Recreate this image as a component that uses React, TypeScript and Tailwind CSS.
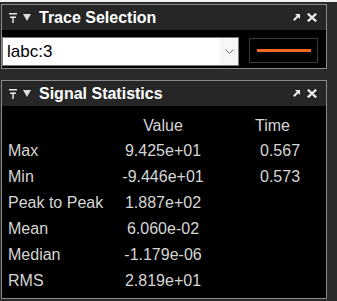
import React from 'react'

const font = "font-['Liberation_Sans',Arial,sans-serif]"

function PinIcon() {
    return (
        <svg width="8" height="10" viewBox="0 0 8 10" className="shrink-0">
            <rect x="0" y="0" width="8" height="1.5" fill="#e4e4e4" />
            <rect x="1" y="3.5" width="6" height="1.5" fill="#e4e4e4" />
            <rect x="3.25" y="3.5" width="1.5" height="6.5" fill="#e4e4e4" />
        </svg>
    )
}

function CollapseIcon() {
    return (
        <svg width="8" height="7" viewBox="0 0 8 7" className="shrink-0">
            <polygon points="0,0 8,0 4,7" fill="#dcdcdc" />
        </svg>
    )
}

function UndockIcon() {
    return (
        <svg width="7" height="7" viewBox="0 0 7 7" className="shrink-0">
            <polygon points="2,0 7,0 7,5" fill="#ececec" />
            <line x1="0.8" y1="6.2" x2="5" y2="2" stroke="#ececec" strokeWidth="2" />
        </svg>
    )
}

function CloseIcon() {
    return (
        <svg width="10" height="9" viewBox="0 0 10 9" className="shrink-0">
            <line x1="0.8" y1="0.6" x2="9.2" y2="8.4" stroke="#ececec" strokeWidth="2.2" />
            <line x1="9.2" y1="0.6" x2="0.8" y2="8.4" stroke="#ececec" strokeWidth="2.2" />
        </svg>
    )
}

function TitleBar({ title }: { title: string }) {
    return (
        <div className="h-[25px] bg-[#262626] flex items-center pl-[7px] pr-[9px]">
            <PinIcon />
            <div className="ml-[6px]"><CollapseIcon /></div>
            <span className="ml-[8px] text-white font-bold text-[16px] leading-none">{title}</span>
            <div className="ml-auto flex items-center gap-[7px]">
                <UndockIcon />
                <CloseIcon />
            </div>
        </div>
    )
}

const stats = [
    { label: 'Max', value: '9.425e+01', time: '0.567' },
    { label: 'Min', value: '-9.446e+01', time: '0.573' },
    { label: 'Peak to Peak', value: '1.887e+02', time: '' },
    { label: 'Mean', value: '6.060e-02', time: '' },
    { label: 'Median', value: '-1.179e-06', time: '' },
    { label: 'RMS', value: '2.819e+01', time: '' },
]

export default function App() {
    return (
        <div className={`w-[337px] h-[301px] bg-[#2b2b2b] overflow-hidden ${font}`}>
            <div className="h-[2px] bg-[#f0f0f0]" />

            {/* Trace Selection */}
            <div className="pt-[2px] pl-[1px]">
                <div className="w-[326px] border border-[#8a8a8a]">
                    <TitleBar title="Trace Selection" />
                    <div className="h-[38px] bg-black flex items-start pt-[7px]">
                        <div className="w-[237px] h-[29px] bg-white border border-[#7a7a7a] flex items-center">
                            <span className="pl-[4px] text-[17px] text-black leading-none">labc:3</span>
                            <div className="ml-auto w-[18px] h-full bg-[#f7f7f7] flex items-center justify-center">
                                <svg width="9" height="5" viewBox="0 0 9 5">
                                    <polyline points="0.5,0.5 4.5,4.5 8.5,0.5" fill="none" stroke="#666" strokeWidth="1" />
                                </svg>
                            </div>
                        </div>
                        <div className="ml-[10px] mt-[1px] w-[69px] h-[25px] border border-[#3a3a3a] bg-black flex items-center justify-center">
                            <div className="w-[54px] h-[3px] bg-[#f26a22]" />
                        </div>
                    </div>
                </div>
            </div>

            {/* Signal Statistics */}
            <div className="mt-[11px] pl-[1px]">
                <div className="w-[326px] border border-[#8a8a8a]">
                    <TitleBar title="Signal Statistics" />
                    <div className="h-[192px] bg-black pt-[7px] text-[16px] text-[#d6d6d6] leading-none">
                        <div className="h-[25px] flex items-center">
                            <div className="w-[118px]" />
                            <div className="w-[86px] text-center">Value</div>
                            <div className="pl-[49px]">Time</div>
                        </div>
                        {stats.map((s) => (
                            <div key={s.label} className="h-[26px] flex items-center">
                                <div className="w-[118px] pl-[6px]">{s.label}</div>
                                <div className="w-[86px] text-center">{s.value}</div>
                                <div className="pl-[54px]">{s.time}</div>
                            </div>
                        ))}
                    </div>
                </div>
            </div>
        </div>
    )
}
